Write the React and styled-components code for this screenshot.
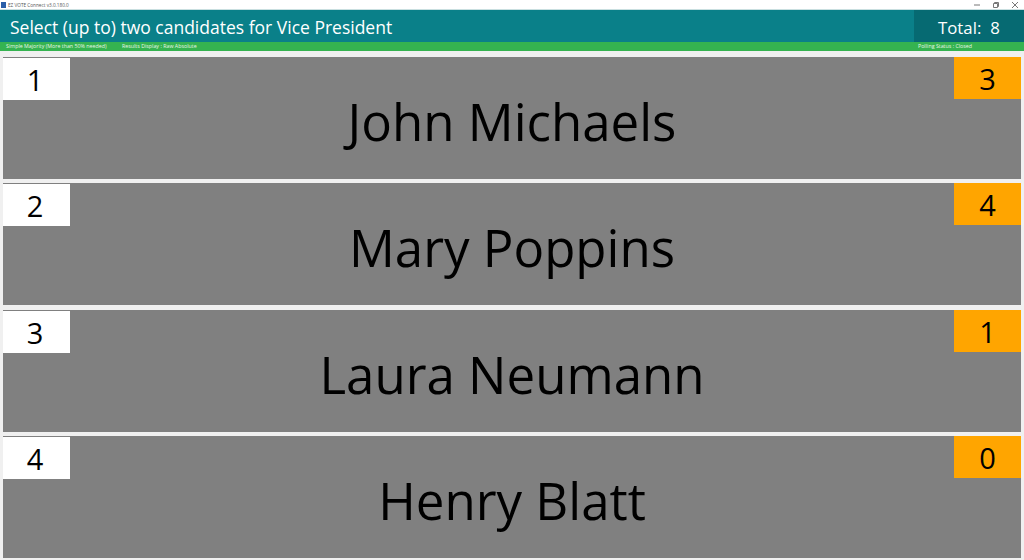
import React from 'react'
import styled, { createGlobalStyle } from 'styled-components'

const candidates = [
  { num: 1, name: 'John Michaels', votes: 3 },
  { num: 2, name: 'Mary Poppins', votes: 4 },
  { num: 3, name: 'Laura Neumann', votes: 1 },
  { num: 4, name: 'Henry Blatt', votes: 0 },
]

const GlobalStyle = createGlobalStyle`
  html, body {
    margin: 0;
    padding: 0;
    background: #f0f0f0;
  }
  body {
    font-family: "Open Sans", "Noto Sans", sans-serif;
  }
`

const Page = styled.div`
  width: 1024px;
  height: 560px;
  display: flex;
  flex-direction: column;
  overflow: hidden;
  background: #f0f0f0;
`

const TitleBar = styled.div`
  height: 9px;
  background: #fff;
  display: flex;
  align-items: center;
  padding-left: 1px;
  gap: 2px;
  font-size: 4.7px;
  color: #555;
`

const AppIcon = styled.div`
  width: 5px;
  height: 6px;
  background: #2a5ea8;
`

const WindowControls = styled.div`
  margin-left: auto;
  display: flex;
  align-items: center;
  gap: 13px;
  padding-right: 6px;
  color: #777;

  svg {
    display: block;
    width: 6px;
    height: 6px;
  }
`

const Header = styled.header`
  height: 33px;
  display: flex;
  background: #0a8089;
  border-top: 1px solid #c9dfe0;
  box-sizing: border-box;
  color: #fff;
`

const Heading = styled.div`
  flex: 1;
  padding-left: 10px;
  font-size: 17.5px;
  line-height: 35px;
`

const Total = styled.div`
  width: 110px;
  background: #066a72;
  font-size: 16.8px;
  line-height: 35px;
  display: flex;
  gap: 9px;
  padding-left: 24px;
  box-sizing: border-box;
`

const StatusBar = styled.div`
  height: 9px;
  background: #35b350;
  color: #e8f5e8;
  font-size: 5.3px;
  line-height: 9px;
  display: flex;
  padding-left: 6px;
`

const StatusItem = styled.span`
  width: ${(p) => p.$width}px;
`

const Rows = styled.div`
  flex: 1;
  display: grid;
  grid-template-rows: repeat(4, 122px);
  row-gap: 4.3px;
  padding: 6px 3px 0;
`

const Row = styled.div`
  display: grid;
  grid-template-columns: 67px 1fr 67px;
  background: #808080;
  color: #000;
`

const NumberBox = styled.div`
  height: 42px;
  margin-top: ${(p) => p.$top}px;
  padding-right: ${(p) => p.$inset}px;
  background: ${(p) => p.$bg};
  font-size: 29px;
  line-height: 43px;
  text-align: center;
`

const Name = styled.div`
  font-size: 51px;
  line-height: 128px;
  text-align: center;
  white-space: nowrap;
`

const App = () => (
  <Page>
    <GlobalStyle />
    <TitleBar>
      <AppIcon />
      <span>EZ VOTE Connect v3.0.180.0</span>
      <WindowControls>
        <svg viewBox="0 0 6 6"><path d="M0 3h6" stroke="currentColor" fill="none" /></svg>
        <svg viewBox="0 0 6 6"><path d="M.5 1.5h4v4h-4zM1.5 1.5v-1h4v4h-1" stroke="currentColor" fill="none" /></svg>
        <svg viewBox="0 0 6 6"><path d="M0 0l6 6M6 0l-6 6" stroke="currentColor" fill="none" /></svg>
      </WindowControls>
    </TitleBar>
    <Header>
      <Heading>Select (up to) two candidates for Vice President</Heading>
      <Total>
        <span>Total:</span>
        <span>8</span>
      </Total>
    </Header>
    <StatusBar>
      <StatusItem $width={116}>Simple Majority (More than 50% needed)</StatusItem>
      <StatusItem $width={796}>Results Display : Raw Absolute</StatusItem>
      <StatusItem $width={80}>Polling Status : Closed</StatusItem>
    </StatusBar>
    <Rows>
      {candidates.map((c) => (
        <Row key={c.num}>
          <NumberBox $bg="#fff" $top={1} $inset={3}>{c.num}</NumberBox>
          <Name>{c.name}</Name>
          <NumberBox $bg="#ffa500" $top={0} $inset={0}>{c.votes}</NumberBox>
        </Row>
      ))}
    </Rows>
  </Page>
)

export default App
